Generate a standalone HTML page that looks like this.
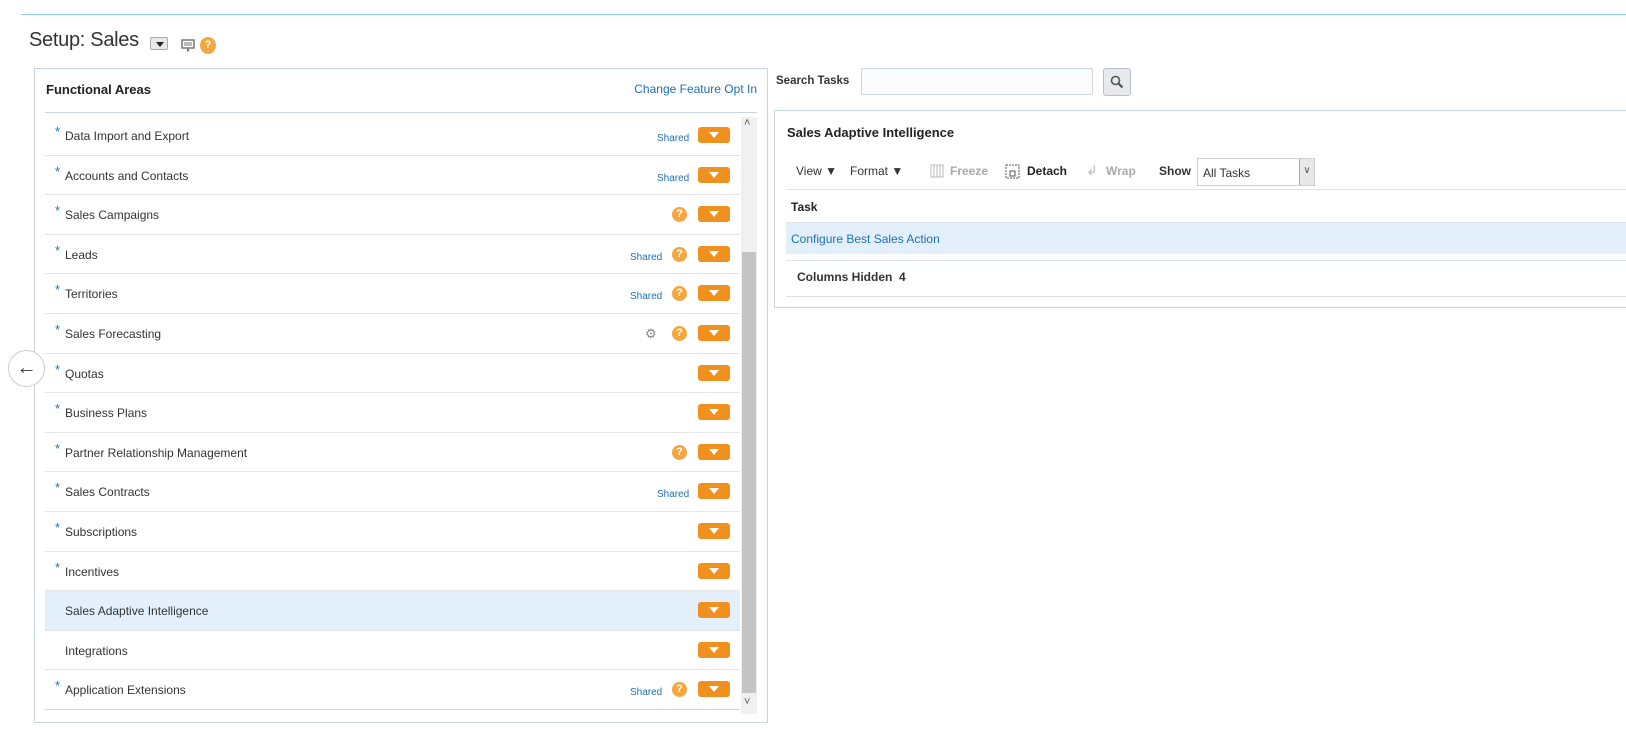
<!DOCTYPE html>
<html><head><meta charset="utf-8"><style>
*{box-sizing:border-box;margin:0;padding:0}
body{width:1626px;height:739px;background:#fff;font-family:"Liberation Sans",Arial,sans-serif;color:#333;position:relative;overflow:hidden;font-size:12px}
.a{position:absolute}
.topline{left:21px;right:0;top:14px;height:1px;background:#8fd3f2}
.title{left:29px;top:29px;font-size:20px;color:#333;letter-spacing:-0.3px}
.dd{left:150px;top:37px;width:18px;height:13px;border:1px solid #aaa;border-radius:2px;background:#e8e8e8}
.dd:after{content:"";position:absolute;left:5px;top:4px;border:4px solid transparent;border-top:5px solid #222}
.q{width:15px;height:15px;border-radius:50%;background:#f4a640;color:#fff;font-weight:bold;font-size:11px;text-align:center;line-height:15px}
.panel{left:34px;top:68px;width:734px;height:655px;border:1px solid #c9d6e0}
.fa{left:46px;top:82px;font-weight:bold;font-size:13px;color:#222}
.cf{left:620px;top:82px;width:137px;text-align:right;color:#1f6fb5;font-size:12px}
.hl{left:45px;top:112px;width:712px;height:1px;background:#c9d6e0}
.row{position:absolute;left:45px;width:695px;height:39.6px;border-bottom:1px solid #e5e5e5}
.row .t{position:absolute;left:20px;top:13px;color:#333}
.row .s{position:absolute;left:10px;top:8px;color:#1f6fb5;font-size:13px}
.row .sh{position:absolute;top:17px;color:#1f6fb5;font-size:10px}
.row .ob{position:absolute;left:653px;top:11px;width:32px;height:16px;background:#f0901e;border-radius:3px}
.row .ob:after{content:"";position:absolute;left:11px;top:5px;border:5px solid transparent;border-top:6px solid #fff;border-bottom:0}
.row .q{position:absolute;left:627px;top:12px}
.sel{background:#e3f0fb}
.sb{left:741px;top:117px;width:16px;height:597px;background:#f0f0f0}
.thumb{left:742px;top:252px;width:14px;height:441px;background:#c4c4c4}
.circ{left:8px;top:350px;width:37px;height:37px;border-radius:50%;border:1px solid #ccc;background:#fff;text-align:center;line-height:34px;font-size:20px;color:#333}
.rp{left:774px;top:110px;width:860px;height:198px;border:1px solid #c9d6e0}
.line{height:1px;background:#dde3e8}
</style></head><body>
<div class="a topline"></div>
<div class="a title">Setup: Sales</div>
<div class="a dd"></div>
<svg class="a" style="left:181px;top:38px" width="16" height="16" viewBox="0 0 16 16"><rect x="1" y="2" width="12" height="8" fill="none" stroke="#777" stroke-width="1.5"/><path d="M3 5h8M3 7h8" stroke="#777"/><path d="M6 10v4l3-2z" fill="#777"/></svg>
<div class="a q" style="left:200px;top:37px;width:16px;height:17px;line-height:17px">?</div>

<div class="a panel"></div>
<div class="a fa">Functional Areas</div>
<div class="a cf">Change Feature Opt In</div>
<div class="a hl"></div>
<div class="a sb"></div>
<div class="a thumb"></div>
<div class="a" style="left:744px;top:117px;font-size:11px;color:#555">&#x2C4;</div>
<div class="a" style="left:744px;top:696px;font-size:11px;color:#555">&#x2C5;</div>

<div class="row" style="top:116px"><span class="s">*</span><span class="t">Data Import and Export</span><span class="sh" style="left:612px">Shared</span><span class="ob"></span></div>
<div class="row" style="top:155.6px"><span class="s">*</span><span class="t">Accounts and Contacts</span><span class="sh" style="left:612px">Shared</span><span class="ob"></span></div>
<div class="row" style="top:195.2px"><span class="s">*</span><span class="t">Sales Campaigns</span><span class="q">?</span><span class="ob"></span></div>
<div class="row" style="top:234.8px"><span class="s">*</span><span class="t">Leads</span><span class="sh" style="left:585px">Shared</span><span class="q">?</span><span class="ob"></span></div>
<div class="row" style="top:274.4px"><span class="s">*</span><span class="t">Territories</span><span class="sh" style="left:585px">Shared</span><span class="q">?</span><span class="ob"></span></div>
<div class="row" style="top:314px"><span class="s">*</span><span class="t">Sales Forecasting</span><span style="position:absolute;left:600px;top:12px;color:#888;font-size:13px">&#9881;</span><span class="q">?</span><span class="ob"></span></div>
<div class="row" style="top:353.6px"><span class="s">*</span><span class="t">Quotas</span><span class="ob"></span></div>
<div class="row" style="top:393.2px"><span class="s">*</span><span class="t">Business Plans</span><span class="ob"></span></div>
<div class="row" style="top:432.8px"><span class="s">*</span><span class="t">Partner Relationship Management</span><span class="q">?</span><span class="ob"></span></div>
<div class="row" style="top:472.4px"><span class="s">*</span><span class="t">Sales Contracts</span><span class="sh" style="left:612px">Shared</span><span class="ob"></span></div>
<div class="row" style="top:512px"><span class="s">*</span><span class="t">Subscriptions</span><span class="ob"></span></div>
<div class="row" style="top:551.6px"><span class="s">*</span><span class="t">Incentives</span><span class="ob"></span></div>
<div class="row sel" style="top:591.2px"><span class="t">Sales Adaptive Intelligence</span><span class="ob"></span></div>
<div class="row" style="top:630.8px"><span class="t">Integrations</span><span class="ob"></span></div>
<div class="row" style="top:670.4px;border-bottom:1px solid #c9d6e0"><span class="s">*</span><span class="t">Application Extensions</span><span class="sh" style="left:585px">Shared</span><span class="q">?</span><span class="ob"></span></div>

<div class="a circ">&#8592;</div>

<div class="a" style="left:776px;top:75px;font-weight:bold;font-size:11.5px;color:#333">Search Tasks</div>
<div class="a" style="left:861px;top:68px;width:232px;height:27px;border:1px solid #ccd6de;border-radius:2px;background:#fbfcfd"></div>
<div class="a" style="left:1103px;top:68px;width:28px;height:28px;border:1px solid #b8c0c8;border-radius:3px;background:#e6eaee"></div>
<svg class="a" style="left:1109px;top:74px" width="16" height="16" viewBox="0 0 16 16"><circle cx="6.5" cy="6.5" r="4" fill="none" stroke="#555" stroke-width="1.6"/><path d="M9.5 9.5l4 4" stroke="#555" stroke-width="2.2"/></svg>

<div class="a rp"></div>
<div class="a" style="left:787px;top:125px;font-weight:bold;font-size:13px;color:#222">Sales Adaptive Intelligence</div>
<div class="a" style="left:796px;top:164px;color:#333">View &#9660;</div>
<div class="a" style="left:850px;top:164px;color:#333">Format &#9660;</div>
<svg class="a" style="left:930px;top:164px" width="14" height="14"><rect x="1" y="1" width="12" height="12" fill="none" stroke="#bbb"/><path d="M4 1v12M7 1v12M10 1v12" stroke="#bbb"/></svg>
<div class="a" style="left:950px;top:164px;color:#aaa;font-weight:bold">Freeze</div>
<svg class="a" style="left:1005px;top:163px" width="16" height="16"><rect x="1" y="2" width="13" height="13" fill="none" stroke="#555" stroke-dasharray="2 1"/><rect x="5" y="8" width="5" height="5" fill="none" stroke="#555"/></svg>
<div class="a" style="left:1027px;top:164px;color:#222;font-weight:bold">Detach</div>
<div class="a" style="left:1086px;top:162px;color:#bbb;font-size:14px">&#8626;</div>
<div class="a" style="left:1106px;top:164px;color:#aaa;font-weight:bold">Wrap</div>
<div class="a" style="left:1159px;top:164px;color:#333;font-weight:bold">Show</div>
<div class="a" style="left:1197px;top:158px;width:118px;height:28px;border:1px solid #ccd0d4;background:#fff;padding:7px 5px;color:#333">All Tasks</div>
<div class="a" style="left:1299px;top:159px;width:15px;height:26px;border-left:1px solid #aaa;background:#e8e8e8;font-size:10px;text-align:center;line-height:24px;color:#555">&#8744;</div>
<div class="a line" style="left:786px;right:0;top:189px"></div>
<div class="a" style="left:791px;top:200px;font-weight:bold;color:#222">Task</div>
<div class="a line" style="left:786px;right:0;top:222px"></div>
<div class="a" style="left:786px;right:0;top:223px;height:31px;background:#e3f0fb"></div>
<div class="a" style="left:791px;top:232px;color:#1f6fb5">Configure Best Sales Action</div>
<div class="a line" style="left:786px;right:0;top:260px"></div>
<div class="a" style="left:797px;top:270px;font-weight:bold;color:#333">Columns Hidden&nbsp; 4</div>
<div class="a line" style="left:786px;right:0;top:296px"></div>
</body></html>
